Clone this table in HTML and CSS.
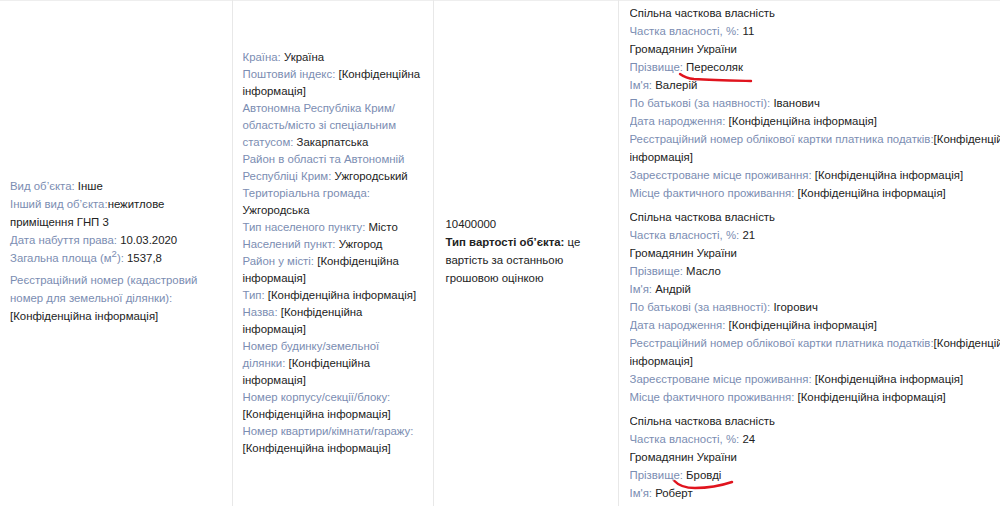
FILE: index.html
```html
<!DOCTYPE html>
<html lang="uk">
<head>
    <meta charset="UTF-8">
    <title>Об'єкти нерухомості</title>
    <link rel="stylesheet" href="styles.css">
</head>
<body>

<table class="objects">
    <colgroup>
        <col class="w-object">
        <col class="w-address">
        <col class="w-cost">
        <col class="w-owners">
    </colgroup>
    <tr>
        <!-- Об'єкт -->
        <td class="cell cell-object">
            <div><span class="lbl">Вид об’єкта:</span> Інше</div>
            <div><span class="lbl">Інший вид об’єкта:</span>нежитлове приміщення ГНП 3</div>
            <div><span class="lbl">Дата набуття права:</span> 10.03.2020</div>
            <div><span class="lbl">Загальна площа (м<sup>2</sup>):</span> 1537,8</div>
            <div class="gap"><span class="lbl">Реєстраційний номер (кадастровий номер для земельної ділянки):</span> [Конфіденційна інформація]</div>
        </td>

        <!-- Адреса -->
        <td class="cell cell-address">
            <div><span class="lbl">Країна:</span> Україна</div>
            <div><span class="lbl">Поштовий індекс:</span> [Конфіденційна інформація]</div>
            <div><span class="lbl">Автономна Республіка Крим/ область/місто зі спеціальним статусом:</span> Закарпатська</div>
            <div><span class="lbl">Район в області та Автономній Республіці Крим:</span> Ужгородський</div>
            <div><span class="lbl">Територіальна громада:</span> Ужгородська</div>
            <div><span class="lbl">Тип населеного пункту:</span> Місто</div>
            <div><span class="lbl">Населений пункт:</span> Ужгород</div>
            <div><span class="lbl">Район у місті:</span> [Конфіденційна інформація]</div>
            <div><span class="lbl">Тип:</span> [Конфіденційна інформація]</div>
            <div><span class="lbl">Назва:</span> [Конфіденційна інформація]</div>
            <div><span class="lbl">Номер будинку/земельної ділянки:</span> [Конфіденційна інформація]</div>
            <div><span class="lbl">Номер корпусу/секції/блоку:</span> [Конфіденційна інформація]</div>
            <div><span class="lbl">Номер квартири/кімнати/гаражу:</span> [Конфіденційна інформація]</div>
        </td>

        <!-- Вартість -->
        <td class="cell cell-cost">
            <div>10400000</div>
            <div><b>Тип вартості об’єкта:</b> це вартість за останньою грошовою оцінкою</div>
        </td>

        <!-- Власники -->
        <td class="cell cell-owners">
            <div class="owners">
                <div class="owner">
                    <div>Спільна часткова власність</div>
                    <div><span class="lbl">Частка власності, %:</span> 11</div>
                    <div>Громадянин України</div>
                    <div><span class="lbl">Прізвище:</span> <span class="marked">Пересоляк<svg class="mark mark-1" width="76" height="13" viewBox="0 0 76 13"><path d="M2 3 C 6 6, 10 7.5, 16 8 C 35 9, 55 9.5, 73 10" /></svg></span></div>
                    <div><span class="lbl">Ім'я:</span> Валерій</div>
                    <div><span class="lbl">По батькові (за наявності):</span> Іванович</div>
                    <div><span class="lbl">Дата народження:</span> [Конфіденційна інформація]</div>
                    <div><span class="lbl">Реєстраційний номер облікової картки платника податків:</span>[Конфіденційна інформація]</div>
                    <div><span class="lbl">Зареєстроване місце проживання:</span> [Конфіденційна інформація]</div>
                    <div><span class="lbl">Місце фактичного проживання:</span> [Конфіденційна інформація]</div>
                </div>
                <div class="owner">
                    <div>Спільна часткова власність</div>
                    <div><span class="lbl">Частка власності, %:</span> 21</div>
                    <div>Громадянин України</div>
                    <div><span class="lbl">Прізвище:</span> Масло</div>
                    <div><span class="lbl">Ім'я:</span> Андрій</div>
                    <div><span class="lbl">По батькові (за наявності):</span> Ігорович</div>
                    <div><span class="lbl">Дата народження:</span> [Конфіденційна інформація]</div>
                    <div><span class="lbl">Реєстраційний номер облікової картки платника податків:</span>[Конфіденційна інформація]</div>
                    <div><span class="lbl">Зареєстроване місце проживання:</span> [Конфіденційна інформація]</div>
                    <div><span class="lbl">Місце фактичного проживання:</span> [Конфіденційна інформація]</div>
                </div>
                <div class="owner">
                    <div>Спільна часткова власність</div>
                    <div><span class="lbl">Частка власності, %:</span> 24</div>
                    <div>Громадянин України</div>
                    <div><span class="lbl">Прізвище:</span> <span class="marked">Бровді<svg class="mark mark-2" width="62" height="12" viewBox="0 0 62 12"><path d="M1.5 2 C 6 7, 12 9, 22 9 C 36 9, 50 6, 59 3" /></svg></span></div>
                    <div><span class="lbl">Ім'я:</span> Роберт</div>
                    <div><span class="lbl">По батькові (за наявності):</span> Георгійович</div>
                </div>
            </div>
        </td>
    </tr>
</table>

</body>
</html>
```

FILE: styles.css
```css
body {
    margin: 0;
    height: 506px;
    overflow: hidden;
    background: #fff;
    font-family: 'Liberation Sans', Arial, sans-serif;
    font-size: 11.4px;
    color: #222;
}

/* Таблиця об'єктів */
.objects {
    border-collapse: collapse;
    table-layout: fixed;
    width: 1040px;
    height: 506px;
}

.w-object { width: 232px; }
.w-address { width: 201px; }
.w-cost { width: 185px; }
.w-owners { width: 422px; }

.cell {
    border-top: 1px solid #eee;
    border-right: 1px solid #e8e8e8;
    padding: 0 10px;
    vertical-align: middle;
    line-height: 18px;
}

.cell-object {
    padding-bottom: 6px;
}

.cell-address {
    line-height: 17px;
    padding-bottom: 2px;
}

.cell-cost {
    padding-left: 12px;
    padding-bottom: 5px;
}

.cell-owners {
    vertical-align: top;
    padding-left: 11px;
}

.lbl {
    color: #7b8db2;
}

.gap {
    margin-top: 4px;
}

sup {
    font-size: 9.5px;
    line-height: 0;
}

/* Власники */
.owners {
    height: 505px;
    overflow: hidden;
    padding-top: 3px;
    box-sizing: border-box;
}

.owner + .owner {
    margin-top: 6px;
}

.marked {
    position: relative;
}

.mark {
    position: absolute;
    pointer-events: none;
}

.mark path {
    fill: none;
    stroke: #e0141e;
    stroke-width: 2.4;
    stroke-linecap: round;
}

.mark-1 {
    left: -8px;
    top: 10px;
}

.mark-2 {
    left: -13px;
    top: 10px;
}
```
